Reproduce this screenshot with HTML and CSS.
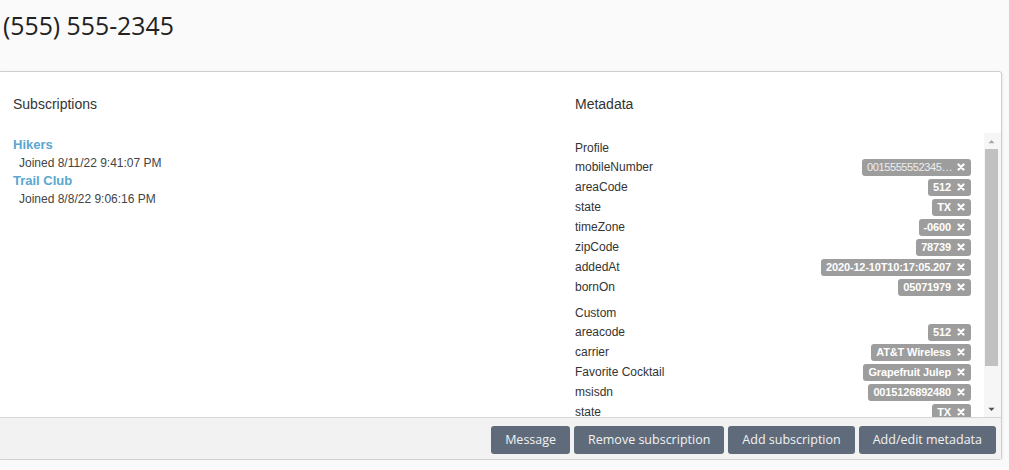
FILE: index.html
```html
<!DOCTYPE html>
<html lang="en">
<head>
<meta charset="utf-8">
<title>(555) 555-2345</title>
<link rel="stylesheet" href="styles.css">
</head>
<body>
<header class="page-head">
  <h1 class="phone">(555) 555-2345</h1>
</header>
<section class="panel">
  <div class="panel-body">
    <div class="col subs">
      <h2 class="col-title">Subscriptions</h2>
      <ul class="sub-list">
        <li class="sub">
          <a class="sub-name" href="#">Hikers</a>
          <div class="sub-joined">Joined 8/11/22 9:41:07 PM</div>
        </li>
        <li class="sub">
          <a class="sub-name" href="#">Trail Club</a>
          <div class="sub-joined">Joined 8/8/22 9:06:16 PM</div>
        </li>
      </ul>
    </div>
    <div class="col meta">
      <h2 class="col-title">Metadata</h2>
      <div class="meta-box">
        <div class="meta-list">
          <div class="meta-group">
            <div class="group-title">Profile</div>
            <div class="meta-row"><span class="meta-key">mobileNumber</span><span class="tag tag-trunc">0015555552345…<svg class="x" viewBox="0 0 8 8"><path d="M1.5 1.5L6.5 6.5M6.5 1.5L1.5 6.5"/></svg></span></div>
            <div class="meta-row"><span class="meta-key">areaCode</span><span class="tag">512<svg class="x" viewBox="0 0 8 8"><path d="M1.5 1.5L6.5 6.5M6.5 1.5L1.5 6.5"/></svg></span></div>
            <div class="meta-row"><span class="meta-key">state</span><span class="tag">TX<svg class="x" viewBox="0 0 8 8"><path d="M1.5 1.5L6.5 6.5M6.5 1.5L1.5 6.5"/></svg></span></div>
            <div class="meta-row"><span class="meta-key">timeZone</span><span class="tag">-0600<svg class="x" viewBox="0 0 8 8"><path d="M1.5 1.5L6.5 6.5M6.5 1.5L1.5 6.5"/></svg></span></div>
            <div class="meta-row"><span class="meta-key">zipCode</span><span class="tag">78739<svg class="x" viewBox="0 0 8 8"><path d="M1.5 1.5L6.5 6.5M6.5 1.5L1.5 6.5"/></svg></span></div>
            <div class="meta-row"><span class="meta-key">addedAt</span><span class="tag">2020-12-10T10:17:05.207<svg class="x" viewBox="0 0 8 8"><path d="M1.5 1.5L6.5 6.5M6.5 1.5L1.5 6.5"/></svg></span></div>
            <div class="meta-row"><span class="meta-key">bornOn</span><span class="tag">05071979<svg class="x" viewBox="0 0 8 8"><path d="M1.5 1.5L6.5 6.5M6.5 1.5L1.5 6.5"/></svg></span></div>
          </div>
          <div class="meta-group">
            <div class="group-title">Custom</div>
            <div class="meta-row"><span class="meta-key">areacode</span><span class="tag">512<svg class="x" viewBox="0 0 8 8"><path d="M1.5 1.5L6.5 6.5M6.5 1.5L1.5 6.5"/></svg></span></div>
            <div class="meta-row"><span class="meta-key">carrier</span><span class="tag">AT&amp;T Wireless<svg class="x" viewBox="0 0 8 8"><path d="M1.5 1.5L6.5 6.5M6.5 1.5L1.5 6.5"/></svg></span></div>
            <div class="meta-row"><span class="meta-key">Favorite Cocktail</span><span class="tag">Grapefruit Julep<svg class="x" viewBox="0 0 8 8"><path d="M1.5 1.5L6.5 6.5M6.5 1.5L1.5 6.5"/></svg></span></div>
            <div class="meta-row"><span class="meta-key">msisdn</span><span class="tag">0015126892480<svg class="x" viewBox="0 0 8 8"><path d="M1.5 1.5L6.5 6.5M6.5 1.5L1.5 6.5"/></svg></span></div>
            <div class="meta-row"><span class="meta-key">state</span><span class="tag">TX<svg class="x" viewBox="0 0 8 8"><path d="M1.5 1.5L6.5 6.5M6.5 1.5L1.5 6.5"/></svg></span></div>
          </div>
        </div>
        <div class="scrollbar">
          <div class="sb-btn sb-up"><svg viewBox="0 0 8 5"><path d="M0.5 4.5L4 0.8L7.5 4.5Z"/></svg></div>
          <div class="sb-track"><div class="sb-thumb"></div></div>
          <div class="sb-btn sb-down"><svg viewBox="0 0 8 5"><path d="M0.5 0.5L4 4.2L7.5 0.5Z"/></svg></div>
        </div>
      </div>
    </div>
  </div>
  <div class="panel-foot">
    <button class="btn" type="button">Message</button>
    <button class="btn" type="button">Remove subscription</button>
    <button class="btn" type="button">Add subscription</button>
    <button class="btn" type="button">Add/edit metadata</button>
  </div>
</section>
</body>
</html>
```
FILE: styles.css
```css
* { box-sizing: border-box; }

html, body {
  margin: 0;
  padding: 0;
  background: #fafafa;
  overflow: hidden;
}

body {
  font-family: "Liberation Sans", Arial, sans-serif;
  color: #333;
}

.page-head {
  padding: 8px 0 28px 3px;
}

.phone {
  margin: 0;
  font-family: "Open Sans", sans-serif;
  font-weight: 400;
  font-size: 24.8px;
  line-height: 35px;
  color: #222;
}

.panel {
  margin-left: -2px;
  width: 1004px;
  background: #fff;
  border: 1px solid #cfcfcf;
  border-radius: 3px;
  box-shadow: 0 1px 3px rgba(0, 0, 0, 0.12);
}

.panel-body {
  display: grid;
  grid-template-columns: 549px 1fr;
  column-gap: 13px;
  padding: 24px 0 0 14px;
}

.col-title {
  margin: 0 0 21px;
  font-size: 14px;
  line-height: 16px;
  font-weight: 400;
  color: #333;
}

.sub-list {
  list-style: none;
  margin: 0;
  padding: 3px 0 0;
  display: flex;
  flex-direction: column;
  gap: 1px;
}

.sub-name {
  display: block;
  font-size: 13px;
  line-height: 18px;
  font-weight: 700;
  color: #5aa7cf;
  text-decoration: none;
}

.sub-joined {
  margin-top: 1px;
  padding-left: 6px;
  font-size: 12px;
  line-height: 16px;
  color: #444;
}

.meta-box {
  display: flex;
  height: 284px;
  overflow: hidden;
}

.meta-list {
  flex: 1;
  padding: 7px 13px 0 0;
  display: flex;
  flex-direction: column;
  gap: 8px;
}

.group-title {
  font-size: 12px;
  line-height: 17px;
  color: #333;
}

.meta-row {
  display: flex;
  justify-content: space-between;
  align-items: center;
  height: 20px;
}

.meta-key {
  font-size: 12px;
  line-height: 17px;
  color: #333;
}

.tag {
  display: inline-flex;
  align-items: center;
  gap: 6px;
  height: 17px;
  padding: 0 6px 0 5px;
  background: #9d9d9d;
  border-radius: 3px;
  color: #fff;
  font-size: 11px;
  font-weight: 700;
  letter-spacing: -0.15px;
  white-space: nowrap;
}

.tag-trunc {
  font-weight: 400;
  color: #eeeeee;
  letter-spacing: -0.4px;
  gap: 5px;
}

.tag .x {
  width: 8px;
  height: 8px;
  fill: none;
  stroke: #fff;
  stroke-width: 2.2;
  stroke-linecap: round;
}

.scrollbar {
  width: 17px;
  display: flex;
  flex-direction: column;
  background: #f6f6f6;
  padding-right: 3px;
}

.sb-btn {
  height: 16px;
  display: flex;
  align-items: center;
  justify-content: center;
}

.sb-btn svg {
  width: 7px;
  height: 5px;
}

.sb-up svg { fill: #a8a8a8; }
.sb-down svg { fill: #505050; }

.sb-track {
  flex: 1;
  display: flex;
  flex-direction: column;
}

.sb-thumb {
  height: 217px;
  margin-left: 1px;
  background: #c1c1c1;
}

.panel-foot {
  display: flex;
  justify-content: flex-end;
  gap: 4px;
  padding: 8px 5px 5px 0;
  background: #f2f2f3;
  border-top: 1px solid #d6d6d6;
}

.btn {
  height: 28px;
  padding: 0 14px;
  border: 0;
  border-radius: 3px;
  background: #5f6b7b;
  color: #f2f2f2;
  font-family: "Open Sans", sans-serif;
  font-size: 12.5px;
  line-height: 28px;
  cursor: pointer;
}
```
